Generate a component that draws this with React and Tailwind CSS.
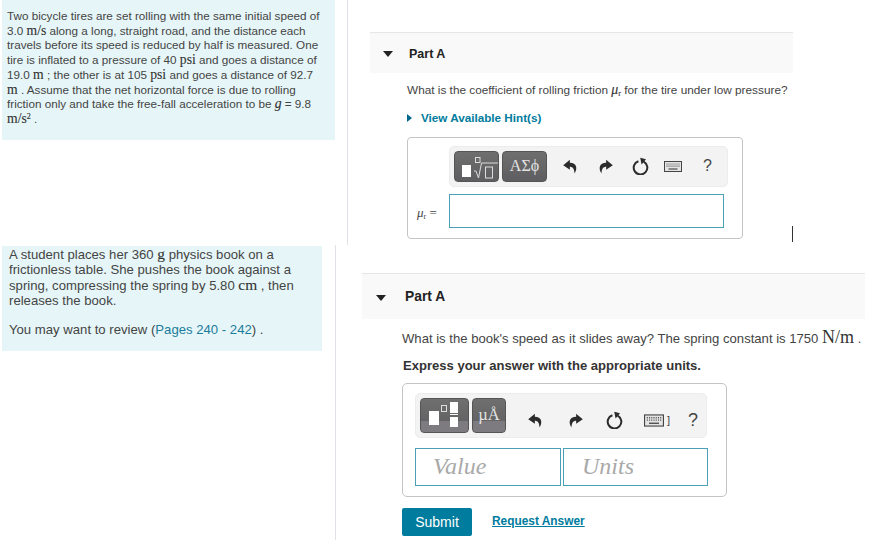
const sans = { fontFamily: '"Liberation Sans", Arial, sans-serif' };
const M = ({ children }) => <span className="font-['Liberation_Serif'] text-[1.17em] leading-[0] text-[#333] [-webkit-text-stroke:0.12px_#333]">{children}</span>;

function Undo({ flip }) {
  return (
    <svg width="15" height="15" viewBox="0 0 14 14" style={flip ? { transform: "scaleX(-1)" } : undefined}>
      <path d="M6.4 0.6 L0.2 5.8 L6.4 10 L6.4 7.2 C9 7.2 10.6 9 10.8 13.6 C13.8 8.4 12.8 3.6 6.4 3.4 Z" fill="#2b2b2b" />
    </svg>
  );
}
function Reload() {
  return (
    <svg width="17" height="18" viewBox="0 0 17 18">
      <path d="M6.4 4.2 A6.8 6.8 0 1 0 11.6 4.6" fill="none" stroke="#2b2b2b" strokeWidth="2" />
      <path d="M8.2 0.8 L14 2.2 L9.6 7.4 Z" fill="#2b2b2b" />
    </svg>
  );
}
function Keyboard({ w = 18, h = 11 }) {
  return (
    <svg width={w} height={h} viewBox="0 0 18 11">
      <rect x="0.5" y="0.5" width="17" height="10" fill="#e4e4e4" stroke="#444" />
      <path d="M2.5 3h13M2.5 5.2h13" stroke="#555" strokeWidth="1.2" strokeDasharray="1 1" />
      <path d="M4.5 8h9" stroke="#555" strokeWidth="1.3" />
    </svg>
  );
}
function DarkButton({ className, children }) {
  return (
    <div className={`relative flex items-center justify-center overflow-hidden rounded-[4px] border border-[#555] bg-gradient-to-b from-[#6f6f6f] to-[#5e5e60] ${className}`}>
      {children}
    </div>
  );
}
function Toolbar({ className, children }) {
  return <div className={`flex items-center rounded-[5px] border border-[#ececec] bg-[#f3f3f3] ${className}`}>{children}</div>;
}
function Caret() {
  return <svg width="10" height="6" viewBox="0 0 10 6"><path d="M0 0h10L5 6z" fill="#222" /></svg>;
}

export default function App() {
  return (
    <div className="flex h-[540px] w-[872px] flex-col overflow-hidden bg-white text-[#444]" style={sans}>
      <div className="flex h-[245px] shrink-0">
        <div className="w-[348px] shrink-0 border-r border-[#dfe3e8] pl-[2px]">
          <div className="h-[140px] w-[333px] whitespace-nowrap bg-[#e6f6f8] pl-[5px] pt-[9px] text-[11.7px] leading-[14.7px]">
            Two bicycle tires are set rolling with the same initial speed of<br />
            3.0 <M>m/s</M> along a long, straight road, and the distance each<br />
            travels before its speed is reduced by half is measured. One<br />
            tire is inflated to a pressure of 40 <M>psi</M> and goes a distance of<br />
            19.0 <M>m</M> ; the other is at 105 <M>psi</M> and goes a distance of 92.7<br />
            <M>m</M> . Assume that the net horizontal force is due to rolling<br />
            friction only and take the free-fall acceleration to be <M><i>g</i></M> = 9.8<br />
            <M>m/s<sup className="text-[8px]">2</sup></M> .
          </div>
        </div>
        <div className="flex-1 pl-[22px] pt-[32px]">
          <div className="flex h-[41px] w-[423px] items-center border-t border-[#e6e6e6] bg-[#f9f9f9] pl-[13px] pt-[2px]">
            <Caret />
            <span className="ml-[16px] text-[12.5px] font-bold text-[#222]">Part A</span>
          </div>
          <div className="ml-[37px] mt-[9px] whitespace-nowrap text-[11.8px] leading-[16px] text-[#444]">
            What is the coefficient of rolling friction <M><i>μ</i><sub className="text-[8px]">r</sub></M> for the tire under low pressure?
          </div>
          <div className="ml-[37px] mt-[11px] flex items-center text-[11.7px] font-bold text-[#007c9e]">
            <svg width="5" height="8" viewBox="0 0 5 8" className="mr-[9px]"><path d="M0 0l5 4-5 4z" fill="#00688a" /></svg>
            View Available Hint(s)
          </div>
          <div className="ml-[37px] mt-[10px] h-[102px] w-[336px] rounded-[4px] border border-[#c4c4c4] pl-[41px] pt-[8px]">
            <Toolbar className="h-[41px] w-[279px] pl-[4px]">
              <DarkButton className="h-[31px] w-[45px]">
                <div className="absolute left-[7px] top-[13px] h-[12px] w-[9px] bg-white" />
                <svg width="26" height="24" viewBox="0 0 26 24" className="absolute left-[19px] top-[4px]" fill="none" stroke="#ddd">
                  <rect x="1.5" y="1.5" width="4.5" height="5" />
                  <path d="M0 15l2 0 2.5 7 3-15h17" />
                  <rect x="11.5" y="11" width="7" height="11" />
                </svg>
              </DarkButton>
              <DarkButton className="ml-[3px] h-[31px] w-[45px] font-['Liberation_Serif'] text-[16px] text-[#e4e4e4]">ΑΣϕ</DarkButton>
              <div className="ml-[16px] flex items-center">
                <Undo />
                <span className="w-[20px]" />
                <Undo flip />
                <span className="w-[19px]" />
                <Reload />
                <span className="w-[15px]" />
                <Keyboard />
                <span className="ml-[21px] text-[16px] text-[#444]">?</span>
              </div>
            </Toolbar>
            <div className="relative mt-[7px]">
              <span className="absolute left-[-32px] top-[9px] font-['Liberation_Serif'] text-[13px] text-[#444]"><i>μ</i><sub className="text-[8px]">r</sub> =</span>
              <div className="h-[34px] w-[275px] border border-[#4b9fb6] bg-white" />
            </div>
          </div>
          <div className="relative">
            <div className="absolute left-[422px] top-[-13px] h-[16px] w-px bg-[#333]" />
          </div>
        </div>
      </div>

      <div className="flex min-h-0 flex-1">
        <div className="w-[336px] shrink-0 border-r border-[#dfe3e8] pl-[2px]">
          <div className="mt-px h-[105px] w-[320px] whitespace-nowrap bg-[#e6f6f8] pl-[7px] text-[13.15px] leading-[15.4px]">
            <div className="pt-px">
              A student places her 360 <M>g</M> physics book on a<br />
              frictionless table. She pushes the book against a<br />
              spring, compressing the spring by 5.80 <M>cm</M> , then<br />
              releases the book.
            </div>
            <div className="mt-[13px]">
              You may want to review (<span className="text-[#1b7c9c]">Pages 240 - 242</span>) .
            </div>
          </div>
        </div>
        <div className="flex-1 pl-[26px] pt-[28px]">
          <div className="flex h-[46px] w-[503px] items-center border-t border-[#e6e6e6] bg-[#f9f9f9] pl-[14px] pt-[2px]">
            <Caret />
            <span className="ml-[19px] text-[13.8px] font-bold text-[#222]">Part A</span>
          </div>
          <div className="ml-[40px] mt-[10px] whitespace-nowrap text-[13.1px] leading-[20px] text-[#444]">
            What is the book's speed as it slides away? The spring constant is 1750 <span className="font-['Liberation_Serif'] text-[18px] leading-[0] text-[#333]">N/m</span> .
          </div>
          <div className="ml-[41px] mt-[8px] text-[13.05px] font-bold leading-[18px] text-[#333]">Express your answer with the appropriate units.</div>
          <div className="ml-[40px] mt-[8px] h-[114px] w-[325px] rounded-[5px] border border-[#c4c4c4] pl-[12px] pt-[9px]">
            <Toolbar className="h-[45px] w-[292px] pl-[4px]">
              <DarkButton className="h-[35px] w-[49px]">
                <div className="absolute inset-x-0 bottom-0 h-[11px] bg-[#7d7b80]" />
                <div className="absolute left-[8px] top-[12px] h-[14px] w-[10px] bg-white" />
                <div className="absolute left-[20px] top-[6px] h-[7px] w-[6px] border border-[#ddd]" />
                <div className="absolute left-[29px] top-[3px] h-[11px] w-[8px] bg-white" />
                <div className="absolute left-[29px] top-[15px] h-px w-[8px] bg-white" />
                <div className="absolute left-[29px] top-[18px] h-[10px] w-[8px] bg-white" />
              </DarkButton>
              <DarkButton className="ml-[3px] h-[35px] w-[34px] font-['Liberation_Serif'] text-[16.5px] text-[#e4e4e4]">
                <div className="absolute inset-x-0 bottom-0 h-[11px] bg-[#7d7b80]" />
                <span className="relative">µÅ</span>
              </DarkButton>
              <div className="ml-[22px] flex items-center pt-[9px]">
                <Undo />
                <span className="w-[25px]" />
                <Undo flip />
                <span className="w-[23px]" />
                <Reload />
                <span className="w-[21px]" />
                <Keyboard w={20} h={13} />
                <span className="ml-[3px] text-[11px] text-[#444]">]</span>
                <span className="ml-[18px] text-[18px] text-[#444]">?</span>
              </div>
            </Toolbar>
            <div className="mt-[10px] flex gap-[2px] font-['Liberation_Serif'] text-[24px] italic text-[#a9a9a9]">
              <div className="flex h-[38px] w-[146px] items-center border border-[#4b9fb6] pb-[2px] pl-[17px]">Value</div>
              <div className="flex h-[38px] w-[145px] items-center border border-[#4b9fb6] pb-[2px] pl-[18px]">Units</div>
            </div>
          </div>
          <div className="ml-[40px] mt-[11px] flex items-center">
            <div className="flex h-[28px] w-[70px] items-center justify-center rounded-[2px] bg-[#007c9e] text-[14px] text-white">Submit</div>
            <span className="ml-[20px] text-[11.9px] font-bold text-[#007c9e] underline">Request Answer</span>
          </div>
        </div>
      </div>
    </div>
  );
}
